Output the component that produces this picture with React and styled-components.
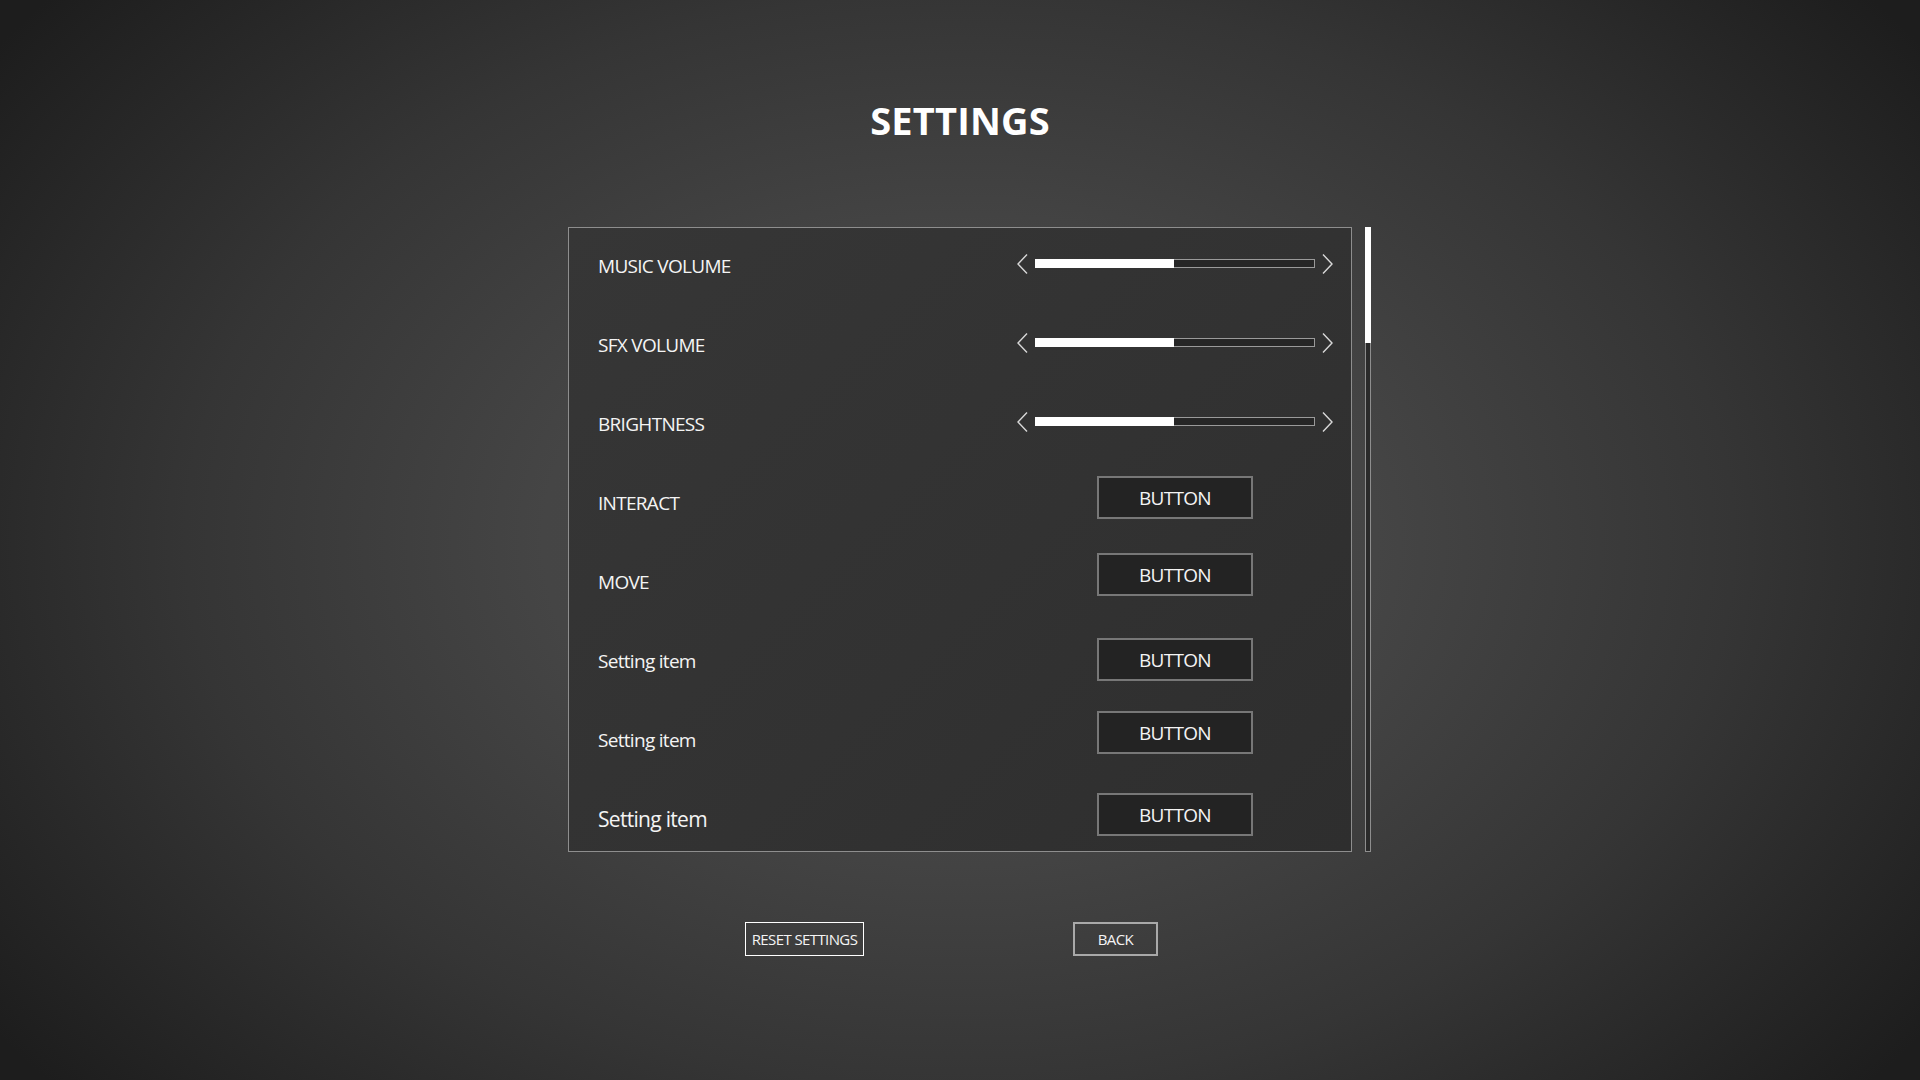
import React from 'react'
import styled, { createGlobalStyle } from 'styled-components'

const settings = [
  { label: 'MUSIC VOLUME', kind: 'slider', value: 50, lift: 4 },
  { label: 'SFX VOLUME', kind: 'slider', value: 50, lift: 4 },
  { label: 'BRIGHTNESS', kind: 'slider', value: 50, lift: 4 },
  { label: 'INTERACT', kind: 'button', lift: 7 },
  { label: 'MOVE', kind: 'button', lift: 9 },
  { label: 'Setting item', kind: 'button', lift: 3 },
  { label: 'Setting item', kind: 'button', lift: 9 },
  { label: 'Setting item', kind: 'button', lift: 6, big: true },
]

const GlobalStyle = createGlobalStyle`
  html, body {
    margin: 0;
    padding: 0;
    height: 100%;
  }
  body {
    background: #1c1c1c;
    font-family: "Open Sans", "Noto Sans", sans-serif;
    color: #f2f2f2;
  }
`

const Page = styled.div`
  width: 1920px;
  height: 1080px;
  display: flex;
  flex-direction: column;
  align-items: center;
  background: radial-gradient(
    ellipse 62% 78% at 50% 50%,
    #4a4a4a 0%,
    #454545 35%,
    #353535 65%,
    #1d1d1d 100%
  );
  overflow: hidden;
`

const Title = styled.h1`
  margin: 101px 0 0;
  font-size: 38px;
  line-height: 1;
  font-weight: 700;
  letter-spacing: 0.2px;
  color: #ffffff;
`

const Stage = styled.div`
  margin-top: 88px;
  width: 100%;
  display: grid;
  grid-template-columns: 1fr 784px 1fr;
  column-gap: 13px;
`

const Panel = styled.div`
  grid-column: 2;
  height: 625px;
  box-sizing: border-box;
  border: 1px solid #8e8e8e;
  background: linear-gradient(135deg, #363636 0%, #323232 55%, #2e2e2e 100%);
  overflow: hidden;
`

const Row = styled.div`
  height: 79px;
  display: flex;
  align-items: center;
  justify-content: space-between;
  padding: 0 18px 0 29px;
`

const Label = styled.span`
  font-size: ${p => (p.$big ? '21px' : '19px')};
  letter-spacing: -0.7px;
  color: #f4f4f4;
  transform: translateY(-2px);
`

const Control = styled.div`
  width: 316px;
  display: flex;
  align-items: center;
  justify-content: center;
  transform: translateY(${p => -p.$lift}px);
`

const Slider = styled.div`
  display: flex;
  align-items: center;
  gap: 7px;
`

const Arrow = styled.svg`
  width: 11px;
  height: 20px;
  display: block;
`

const Track = styled.div`
  width: 280px;
  height: 9px;
  box-sizing: border-box;
  border: 1px solid #9a9a9a;
  background: #262626;
  display: flex;
`

const Fill = styled.div`
  height: 9px;
  margin: -1px 0 0 -1px;
  background: #ffffff;
`

const KeyButton = styled.button`
  width: 156px;
  height: 43px;
  box-sizing: border-box;
  border: 2px solid #777777;
  background: #232323;
  color: #f4f4f4;
  font-family: "Open Sans", "Noto Sans", sans-serif;
  font-size: 19px;
  letter-spacing: -0.7px;
  padding: 0;
`

const ScrollBar = styled.div`
  grid-column: 3;
  width: 6px;
  display: flex;
  flex-direction: column;
`

const Thumb = styled.div`
  height: 116px;
  background: #ffffff;
`

const Rail = styled.div`
  flex: 1;
  box-sizing: border-box;
  border: 1px solid #8e8e8e;
  border-top: none;
  background: #2a2a2a;
`

const Footer = styled.div`
  margin: 70px 17px 0 0;
  display: flex;
  gap: 209px;
`

const FooterButton = styled.button`
  height: 34px;
  width: ${p => p.$w}px;
  box-sizing: border-box;
  border: ${p => (p.$primary ? '1.5px solid #ffffff' : '2px solid #a9a9a9')};
  background: transparent;
  color: #f4f4f4;
  font-family: "Open Sans", "Noto Sans", sans-serif;
  font-size: 15px;
  letter-spacing: -0.6px;
  padding: 0;
`

const Chevron = ({ dir }) => (
  <Arrow viewBox="0 0 11 20">
    <polyline
      points={dir === 'left' ? '10,0.5 1,10 10,19.5' : '1,0.5 10,10 1,19.5'}
      fill="none"
      stroke="#d8d8d8"
      strokeWidth="1.4"
    />
  </Arrow>
)

const App = () => {
  return (
    <>
      <GlobalStyle />
      <Page>
        <Title>SETTINGS</Title>
        <Stage>
          <Panel>
            {settings.map((s, i) => (
              <Row key={i}>
                <Label $big={s.big}>{s.label}</Label>
                <Control $lift={s.lift}>
                  {s.kind === 'slider' ? (
                    <Slider>
                      <Chevron dir="left" />
                      <Track>
                        <Fill style={{ width: `${s.value}%` }} />
                      </Track>
                      <Chevron dir="right" />
                    </Slider>
                  ) : (
                    <KeyButton>BUTTON</KeyButton>
                  )}
                </Control>
              </Row>
            ))}
          </Panel>
          <ScrollBar>
            <Thumb />
            <Rail />
          </ScrollBar>
        </Stage>
        <Footer>
          <FooterButton $primary $w={119}>RESET SETTINGS</FooterButton>
          <FooterButton $w={85}>BACK</FooterButton>
        </Footer>
      </Page>
    </>
  )
}

export default App
